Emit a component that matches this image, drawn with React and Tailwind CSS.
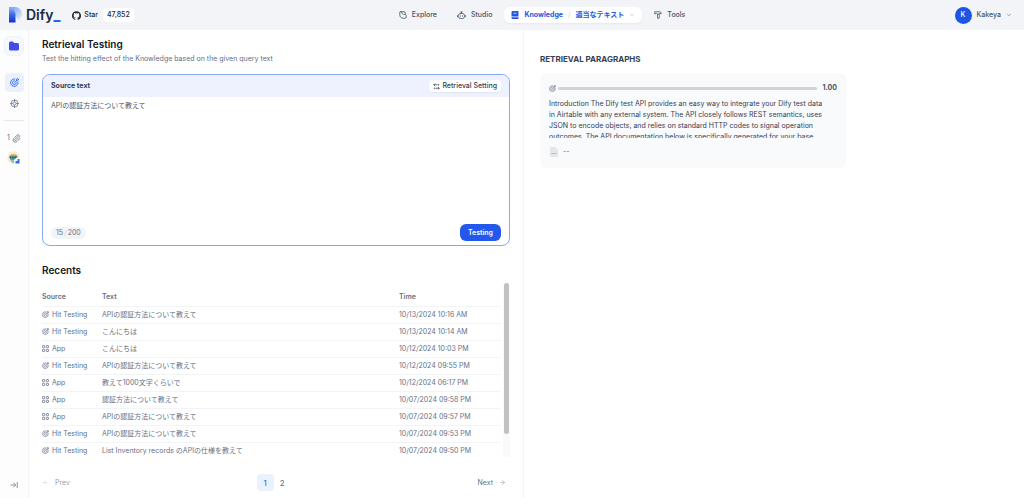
import React, { useState } from 'react'
import { Paperclip, ArrowLeft, ArrowRight, ChevronDown } from 'lucide-react'

const records = [
  { source: 'Hit Testing', text: 'APIの認証方法について教えて', time: '10/13/2024 10:16 AM' },
  { source: 'Hit Testing', text: 'こんにちは', time: '10/13/2024 10:14 AM' },
  { source: 'App', text: 'こんにちは', time: '10/12/2024 10:03 PM' },
  { source: 'Hit Testing', text: 'APIの認証方法について教えて', time: '10/12/2024 09:55 PM' },
  { source: 'App', text: '教えて1000文字くらいで', time: '10/12/2024 06:17 PM' },
  { source: 'App', text: '認証方法について教えて', time: '10/07/2024 09:58 PM' },
  { source: 'App', text: 'APIの認証方法について教えて', time: '10/07/2024 09:57 PM' },
  { source: 'Hit Testing', text: 'APIの認証方法について教えて', time: '10/07/2024 09:53 PM' },
  { source: 'Hit Testing', text: 'List Inventory records のAPIの仕様を教えて', time: '10/07/2024 09:50 PM' },
]

function Logo(){
  return (
    <svg width="13" height="16" viewBox="0 0 13 16" aria-hidden="true">
      <defs>
        <linearGradient id="stem" x1="0" y1="0" x2="0" y2="1">
          <stop offset="0" stopColor="#8fb4f8" />
          <stop offset="0.5" stopColor="#3a66e0" />
          <stop offset="1" stopColor="#1434c4" />
        </linearGradient>
        <linearGradient id="bowl" x1="0" y1="0" x2="1" y2="1">
          <stop offset="0" stopColor="#6f9cf3" />
          <stop offset="1" stopColor="#e9f0fd" />
        </linearGradient>
      </defs>
      <path d="M0 0h6a7 7 0 0 1 7 7c0 3-2 5-4 6L6 8H0z" fill="url(#bowl)" />
      <path d="M0 0.5h4L6.500 7V15.500H0z" fill="url(#stem)" />
    </svg>
  )
}

function TargetIcon({ className }){
  return (
    <svg className={className} viewBox="0 0 24 24" fill="none" stroke="currentColor" strokeWidth="2.2" strokeLinecap="round" strokeLinejoin="round" aria-hidden="true">
      <path d="M21.5 11A10 10 0 1 1 13 2.5" />
      <path d="M17 12.5A5.2 5.2 0 1 1 11.5 7" />
      <path d="M12 12l5.5-5.5M17.5 6.5V3l3-2 .5 2.5 2.5.5-2.5 2.5z" />
    </svg>
  )
}

function AppIcon(){
  return (
    <svg className="size-[7px]" viewBox="0 0 14 14" fill="none" stroke="currentColor" strokeWidth="1.5" aria-hidden="true">
      <rect x="1" y="1" width="4.500" height="4.500" rx="1" />
      <rect x="8.500" y="1" width="4.500" height="4.500" rx="1" />
      <rect x="1" y="8.500" width="4.500" height="4.500" rx="1" />
      <rect x="8.500" y="8.500" width="4.500" height="4.500" rx="1" />
    </svg>
  )
}

function ExploreIcon(){
  return (
    <svg className="size-2" viewBox="0 0 16 16" fill="none" stroke="currentColor" strokeWidth="1.6" strokeLinejoin="round" aria-hidden="true">
      <path d="M3 1.500h7a2.500 2.500 0 0 1 2.500 2.500v3M1.500 3v4.500c0 4 3 7 7 7H12a2.500 2.500 0 0 0 2.500-2.500V9A2 2 0 0 0 12.500 7H11C8 7 6 5.500 5.500 3a2 2 0 0 0-4 0z" />
    </svg>
  )
}

function StudioIcon(){
  return (
    <svg className="size-[9px]" viewBox="0 0 18 18" fill="none" stroke="currentColor" strokeWidth="1.6" strokeLinecap="round" aria-hidden="true">
      <rect x="3" y="5" width="12" height="10" rx="4" />
      <path d="M9 5V2M7.500 2h3M1 9v2.500M17 9v2.500M6.800 9.500v1M11.200 9.500v1" />
    </svg>
  )
}

function BookIcon(){
  return (
    <svg className="size-2" viewBox="0 0 16 16" aria-hidden="true">
      <path d="M3.500 0h10A1.500 1.500 0 0 1 15 1.500V11H1V2.500A2.500 2.500 0 0 1 3.500 0z" fill="currentColor" />
      <path d="M1 12.500h14V16H3a2 2 0 0 1-2-2z" fill="currentColor" />
      <path d="M5 4.500h6" stroke="#fff" strokeWidth="1.400" />
    </svg>
  )
}

function ToolsIcon(){
  return (
    <svg className="size-2" viewBox="0 0 16 16" fill="none" stroke="currentColor" strokeWidth="1.500" strokeLinejoin="round" aria-hidden="true">
      <path d="M1.500 1.500h9c2.500 0 4 1.500 4 4l-3-1V6H7L5 4.500 1.500 6z" />
      <path d="M7 6v8.500h3.500V6" />
    </svg>
  )
}

function GithubIcon(){
  return (
    <svg className="size-[9px]" viewBox="0 0 24 24" fill="currentColor" aria-hidden="true">
      <path d="M12 .5a12 12 0 0 0-3.800 23.400c.6.1.8-.3.8-.6v-2.200c-3.300.7-4-1.400-4-1.400-.6-1.400-1.400-1.800-1.400-1.800-1-.7.1-.7.1-.7 1.200 0 1.900 1.200 1.900 1.200 1 1.800 2.800 1.300 3.500 1 0-.8.400-1.300.7-1.600-2.700-.3-5.500-1.300-5.500-6 0-1.200.5-2.300 1.300-3.100-.2-.4-.6-1.600 0-3.200 0 0 1-.3 3.400 1.200a11.500 11.500 0 0 1 6 0c2.300-1.500 3.300-1.200 3.300-1.200.6 1.600.2 2.800 0 3.200.9.800 1.300 1.900 1.300 3.200 0 4.600-2.800 5.600-5.500 5.900.5.400.9 1 .9 2.200v3.300c0 .3.1.7.8.6A12 12 0 0 0 12 .5z" />
    </svg>
  )
}

function Header(){
  return (
    <header className="flex h-[30px] items-center justify-between bg-[#f2f4f7] pl-[9px] pr-3">
      <div className="flex items-center">
        <a href="#" className="flex items-center gap-1 text-[14px] leading-4 font-semibold text-[#1d2939]">
          <Logo />
          <span>Dify<span className="font-black text-[#2563eb]">_</span></span>
        </a>
        <a href="#" className="ml-3 flex items-center gap-[3px] text-[#24292f]">
          <GithubIcon />
          <span className="font-medium">Star</span>
          <span className="ml-[2px] rounded-sm bg-white px-1 py-[2px] font-medium">47,852</span>
        </a>
      </div>
      <nav className="flex items-center font-medium text-[#475467]">
        <a href="#" className="flex items-center gap-[5px]"><ExploreIcon />Explore</a>
        <a href="#" className="ml-5 flex items-center gap-[5px]"><StudioIcon />Studio</a>
        <div className="mx-3 flex h-4 items-center rounded-md bg-white px-[7px] font-bold text-[#2456e0] shadow-xs">
          <a href="#" className="flex items-center gap-[5px]"><BookIcon />Knowledge</a>
          <span className="mx-[5px] font-normal text-gray-300">/</span>
          <button className="flex items-center gap-[5px]">適当なテキスト<ChevronDown className="size-[6px] text-gray-400" /></button>
        </div>
        <a href="#" className="flex items-center gap-[5px]"><ToolsIcon />Tools</a>
      </nav>
      <button className="flex items-center gap-[5px] pl-1 font-medium text-[#475467]">
        <span className="flex size-[17px] items-center justify-center rounded-full bg-[#1d55e5] text-white">K</span>
        Kakeya
        <ChevronDown className="size-[6px]" />
      </button>
    </header>
  )
}

function Sidebar(){
  return (
    <aside className="flex w-[29px] shrink-0 flex-col items-center border-r border-gray-100 bg-[#fdfdfe] pt-[6px] pb-[9px] text-[#667085]">
      <div className="flex size-5 items-center justify-center rounded-md border border-[#eef1fb] bg-[#f5f8ff]">
        <svg className="size-[10px]" viewBox="0 0 20 18" aria-hidden="true">
          <path d="M0 3a3 3 0 0 1 3-3h4.500l3 3H17a3 3 0 0 1 3 3v9a3 3 0 0 1-3 3H3a3 3 0 0 1-3-3z" fill="#444ce7" />
        </svg>
      </div>
      <a href="#" aria-label="Retrieval Testing" className="mt-[17px] flex size-[19px] items-center justify-center rounded-sm bg-[#eaf0fe] text-[#155eef]">
        <TargetIcon className="size-[9px]" />
      </a>
      <a href="#" aria-label="Settings" className="mt-[7px]">
        <svg className="size-[9px]" viewBox="0 0 18 18" fill="none" stroke="currentColor" strokeWidth="1.500" aria-hidden="true">
          <circle cx="9" cy="9" r="7" />
          <circle cx="9" cy="9" r="3" />
          <path d="M9 0.500v5.500M9 12v5.500M0.500 9H6M12 9h5.500" />
        </svg>
      </a>
      <div className="mt-3 w-5 border-t border-gray-200" />
      <div className="mt-3 flex items-center gap-[2px]">
        1<Paperclip className="size-[9px]" />
      </div>
      <svg className="mt-2 size-[14px]" viewBox="0 0 28 28" aria-hidden="true">
        <circle cx="13" cy="13" r="12.500" fill="#fdebd0" />
        <path d="M5 11c2-6 14-6 16 0l-2 8H7z" fill="#5b9b94" />
        <path d="M7 9l3-4 3 2 3-2 3 4z" fill="#e9c46a" />
        <path d="M5 13h15" stroke="#2f4f55" strokeWidth="3" strokeDasharray="3 2" />
        <path d="M8 19h10l-2 5H10z" fill="#8bc0b4" />
        <circle cx="21" cy="21" r="7" fill="#fff" />
        <path d="M17 20h4v-4h4v9h-8z" fill="#2970ff" />
      </svg>
      <button aria-label="Expand" className="mt-auto">
        <svg className="size-2" viewBox="0 0 16 16" fill="none" stroke="currentColor" strokeWidth="1.500" aria-hidden="true">
          <path d="M1 8h10M7 3.500L11.500 8 7 12.500M14.500 2v12" />
        </svg>
      </button>
    </aside>
  )
}

function QueryBox(){
  const [query, setQuery] = useState('APIの認証方法について教えて')
  return (
    <div className="mt-[9px] flex flex-col rounded-lg border border-[#84a9f0] bg-white">
      <div className="flex h-[22px] items-center justify-between rounded-t-lg bg-[#eef2ff] px-2">
        <label htmlFor="query" className="font-bold text-[#344054]">Source text</label>
        <button className="flex h-3 items-center gap-[2px] rounded-sm bg-white px-1 font-medium text-[#344054] shadow-xs">
          <svg className="size-[7px]" viewBox="0 0 14 14" fill="none" stroke="currentColor" strokeWidth="1.500" aria-hidden="true">
            <path d="M4 1L1.500 3.500 4 6M1.500 3.500H8M10 8l2.500 2.500L10 13M12.500 10.500H6" />
            <circle cx="10.500" cy="3.500" r="1" />
            <circle cx="3.500" cy="10.500" r="1" />
          </svg>
          Retrieval Setting
        </button>
      </div>
      <textarea id="query" value={query} onChange={e=>setQuery(e.target.value)} className="block h-[127px] w-full resize-none px-2 pt-[3px] leading-3 text-[#475467] outline-none" />
      <div className="flex items-center justify-between px-2 pb-1">
        <span className="rounded-md bg-gray-100 px-[5px] leading-3 text-[#667085]">{query.length}<span className="mx-[1px] text-gray-300">/</span>200</span>
        <button className="h-[17px] rounded-md bg-[#2457eb] px-2 font-semibold text-white">Testing</button>
      </div>
    </div>
  )
}

function Recents(){
  return (
    <section className="mt-4">
      <h2 className="text-[10px] leading-4 font-semibold text-[#101828]">Recents</h2>
      <div className="mt-[5px] flex h-[174px] justify-between overflow-hidden">
        <table className="mt-[6px] w-full table-fixed self-start text-left text-[#667085]">
          <thead>
            <tr className="h-[17px] border-b border-gray-100">
              <th className="w-[60px] font-semibold">Source</th>
              <th className="font-semibold">Text</th>
              <th className="w-[102px] font-semibold">Time</th>
            </tr>
          </thead>
          <tbody>
            {records.map((r, i)=>(
              <tr key={i} className="h-[17px] border-b border-gray-100">
                <td>
                  <div className="flex items-center gap-[3px]">
                    {r.source === 'App' ? <AppIcon /> : <TargetIcon className="size-[7px]" />}
                    {r.source}
                  </div>
                </td>
                <td>{r.text}</td>
                <td>{r.time}</td>
              </tr>
            ))}
          </tbody>
        </table>
        <div className="ml-[2px] w-[7px] shrink-0 bg-gray-50 pl-[1px]">
          <div className="h-[87%] w-[5px] rounded-full bg-[#c1c1c1]" />
        </div>
      </div>
      <div className="mt-[17px] flex items-center justify-between">
        <button className="flex items-center gap-[6px] text-gray-400" disabled><ArrowLeft className="size-[7px] text-gray-300" />Prev</button>
        <div className="flex items-center">
          <button className="size-[17px] rounded-sm bg-[#eaf1ff] text-[8px] text-[#155eef]">1</button>
          <button className="size-[17px] text-[8px] text-[#667085]">2</button>
        </div>
        <button className="flex items-center gap-[6px] pr-1 text-[#667085]">Next<ArrowRight className="size-[7px] text-gray-400" /></button>
      </div>
    </section>
  )
}

function Paragraphs(){
  return (
    <section className="flex-1 pt-6 pl-4">
      <h2 className="text-[8px] leading-[10px] font-bold text-[#344054]">RETRIEVAL PARAGRAPHS</h2>
      <article className="mt-[9px] max-w-[306px] rounded-md bg-[#f9fafb] px-[9px] pt-[9px] pb-[11px]">
        <div className="flex items-center gap-[2px] leading-3 text-[#667085]">
          <TargetIcon className="size-[7px]" />
          <div className="h-[3px] flex-1 rounded-full bg-[#d0d3d9]" />
          <span className="ml-[3px] font-bold text-[#475467]">1.00</span>
        </div>
        <p className="mt-1 h-10 overflow-hidden pr-3 leading-[11px] text-[#344054]">
          Introduction The Dify test API provides an easy way to integrate your Dify test data in Airtable with any external system. The API closely follows REST semantics, uses JSON to encode objects, and relies on standard HTTP codes to signal operation outcomes. The API documentation below is specifically generated for your base.
        </p>
        <div className="mt-[9px] flex items-center gap-1 leading-[10px] text-[#667085]">
          <svg className="size-[10px]" viewBox="0 0 20 20" aria-hidden="true">
            <path d="M4 0h8l6 6v12a2 2 0 0 1-2 2H4a2 2 0 0 1-2-2V2a2 2 0 0 1 2-2z" fill="#e4e7ec" />
            <path d="M5 13h2.500M9 13h2.500M13 13h2" stroke="#98a2b3" strokeWidth="2" />
          </svg>
          --
        </div>
      </article>
    </section>
  )
}

export default function App(){
  return (
    <div className="flex min-h-screen flex-col bg-white font-['Inter','Noto_Sans_CJK_JP',sans-serif] text-[7px] leading-[10px]">
      <Header />
      <div className="flex flex-1">
        <Sidebar />
        <main className="flex flex-1">
          <div className="w-1/2 max-w-[495px] border-r border-gray-100 px-[13px] pt-[6px]">
            <h1 className="text-[10px] leading-4 font-semibold text-[#101828]">Retrieval Testing</h1>
            <p className="mt-[1px] leading-3 text-[#667085]">Test the hitting effect of the Knowledge based on the given query text</p>
            <QueryBox />
            <Recents />
          </div>
          <Paragraphs />
        </main>
      </div>
    </div>
  )
}
